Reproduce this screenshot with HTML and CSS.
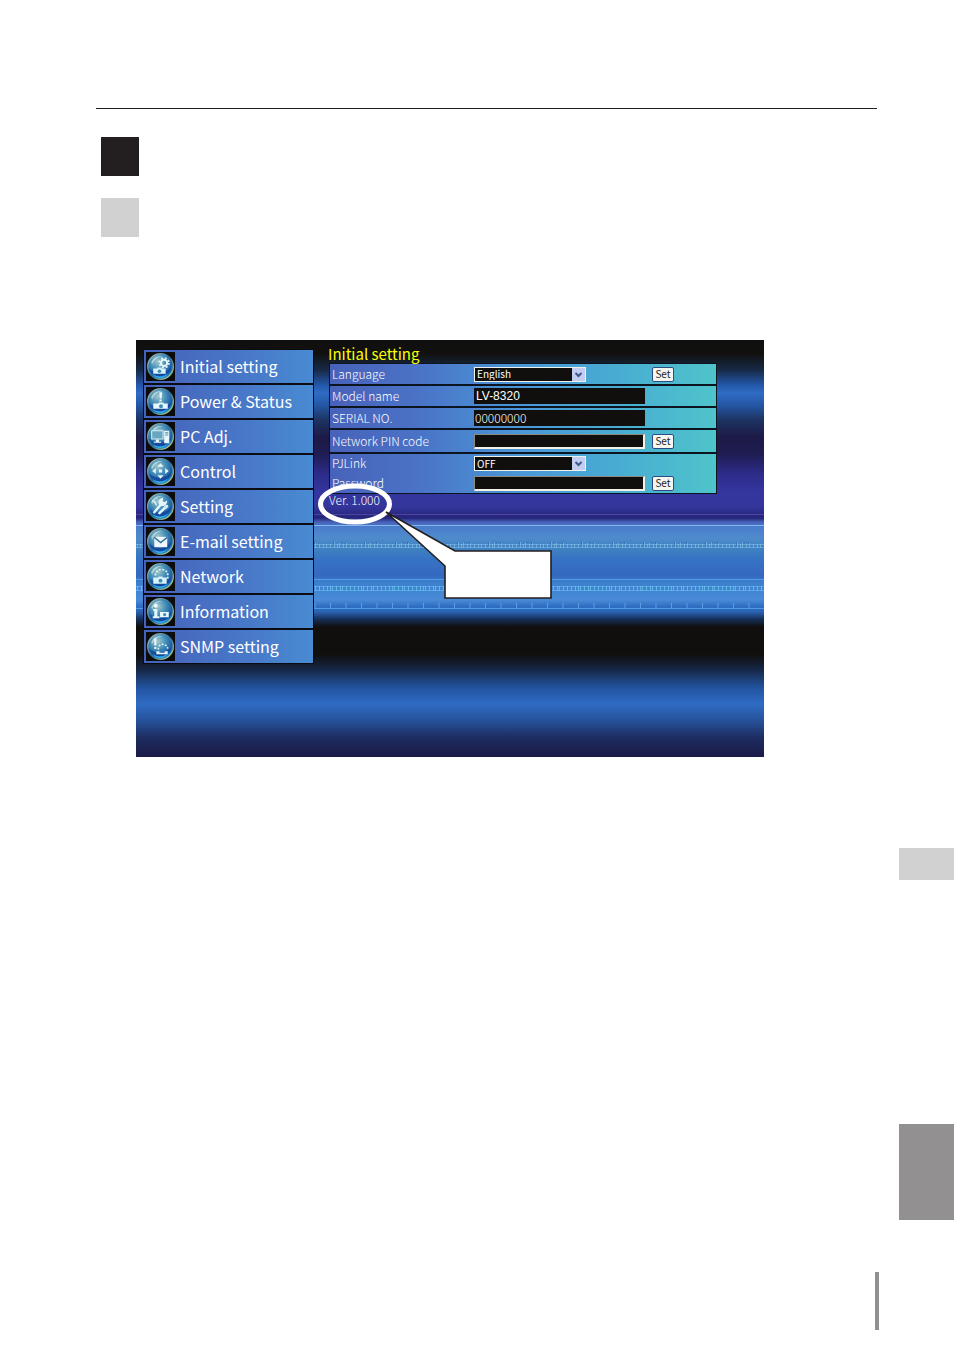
FILE: index.html
```html
<!DOCTYPE html>
<html lang="en">
<head>
<meta charset="utf-8">
<title>Initial setting</title>
<link rel="stylesheet" href="styles.css">
</head>
<body>
<div class="page">
  <main class="sheet">
    <hr class="rule">
    <div class="marker marker-dark"></div>
    <div class="marker marker-light"></div>

    <section class="panel">
      <svg class="backdrop" aria-hidden="true">
        <defs>
          <pattern id="binary" width="31" height="7" patternUnits="userSpaceOnUse" y="202">
            <path d="M0 2.500h31M0 5.500h31" stroke="#74b0e2" stroke-opacity=".7"/>
            <path d="M1.500 2v4M4.500 2v4M8.500 2v4M12.500 0v6M15.500 2v4M17.500 0v6M21.500 2v4M24.500 1v5M28.500 2v4" stroke="#8cc4ee" stroke-opacity=".6"/>
            <path d="M11.500 0v3M16.500 0h4M23.500 0v2" stroke="#2f5fa8" stroke-opacity=".6"/>
          </pattern>
          <pattern id="binary2" width="31" height="7" patternUnits="userSpaceOnUse" y="245">
            <path d="M0 1.500h31M0 5.500h31" stroke="#62b4ec" stroke-opacity=".7"/>
            <path d="M1.500 1v5M5.500 1v5M8.500 1v5M10.500 1v5M14.500 1v5M18.500 1v5M20.500 1v5M24.500 1v5M28.500 1v5" stroke="#6ccaf2" stroke-opacity=".7"/>
          </pattern>
          <pattern id="ticks" width="31" height="7" patternUnits="userSpaceOnUse" x="5" y="263">
            <path d="M3.500 0v6M19 0v6" stroke="#68a8ea" stroke-opacity=".8"/>
          </pattern>
        </defs>
        <rect y="202" width="100%" height="7" fill="url(#binary)"/>
        <rect y="245" width="100%" height="7" fill="url(#binary2)"/>
        <rect y="263" width="100%" height="7" fill="url(#ticks)"/>
        <rect y="174" width="100%" height="1" fill="#4c449e"/>
        <rect y="185" width="100%" height="1" fill="#86b6ee"/>
        <rect y="239" width="100%" height="1" fill="#4f9fe2"/>
        <rect y="268" width="100%" height="1" fill="#4f9ae6"/>
      </svg>

      <svg width="0" height="0" class="defs" aria-hidden="true">
        <defs>
          <radialGradient id="ball" cx=".4" cy=".3" r=".75">
            <stop offset="0" stop-color="#a4c8cc"/>
            <stop offset=".4" stop-color="#4590b8"/>
            <stop offset=".75" stop-color="#1d5aa4"/>
            <stop offset="1" stop-color="#1a9ae0"/>
          </radialGradient>
          <linearGradient id="rim" x1="0" y1="0" x2="1" y2="1">
            <stop offset="0" stop-color="#b8c8b8"/>
            <stop offset=".5" stop-color="#2e6e98"/>
            <stop offset="1" stop-color="#d0dc80"/>
          </linearGradient>
          <symbol id="orb" viewBox="0 0 28 28">
            <circle cx="14" cy="14" r="12.400" fill="url(#ball)" stroke="url(#rim)" stroke-width="1.300"/>
            <path d="M3.500 16c4 5 14 6 21-1-1 5-5 9-10.500 9S4.500 21 3.500 16z" fill="#0e3f98" fill-opacity=".65"/>
            <path d="M6 21c5 4 12 3 16-1-2 3-5 5-8 5s-6-1-8-4z" fill="#38b4f4"/>
            <path d="M5 10c2-5 7-7 11-6-4 0-8 3-10 8z" fill="#e4f0e4" fill-opacity=".6"/>
          </symbol>
        </defs>
      </svg>

      <nav class="menu">
        <a class="item" href="#"><svg class="icon" viewBox="0 0 28 28"><use href="#orb"/><circle cx="17.500" cy="10.500" r="3" fill="none" stroke="#e6f6fa" stroke-width="2"/><circle cx="17.500" cy="10.500" r="4.700" fill="none" stroke="#e6f6fa" stroke-width="1.600" stroke-dasharray="1.900 1.800"/><path d="M7 16h4v-1h4v1h4v5H7z" fill="#d8f2fa"/><circle cx="13" cy="18.500" r="1.700" fill="#3c8cb4"/></svg><span>Initial setting</span></a>
        <a class="item" href="#"><svg class="icon" viewBox="0 0 28 28"><use href="#orb"/><path d="M12.800 5h2.800l-.5 6h-1.800zM13 12h2.200v2H13zM7 16h5v-1h5v1h4v5H7z" fill="#e6f6fa"/><circle cx="14.500" cy="18.500" r="1.900" fill="#3c8cb4"/></svg><span>Power &amp; Status</span></a>
        <a class="item" href="#"><svg class="icon" viewBox="0 0 28 28"><use href="#orb"/><path d="M5.500 8.500h11v8h-11z" fill="#67a8c0" stroke="#d4ecf2"/><path d="M9.500 17h3v2h2v1h-7v-1h2zM17.500 8.500h5v12h-5z" fill="#e6f6fa"/><path d="M18.500 10.500h3M18.500 12.500h3" stroke="#5090b0"/></svg><span>PC Adj.</span></a>
        <a class="item" href="#"><svg class="icon" viewBox="0 0 28 28"><use href="#orb"/><path d="M14 6l3 3.500h-6zM14 21l3-3.500h-6zM6 13.500l3.500-3v6zM22 13.500l-3.500-3v6zM12.500 12h3v3h-3z" fill="#e6f6fa"/></svg><span>Control</span></a>
        <a class="item" href="#"><svg class="icon" viewBox="0 0 28 28"><use href="#orb"/><path d="M8 19.500l6-7M13 20.500l7-7" stroke="#e6f6fa" stroke-width="2.400" stroke-linecap="round"/><path d="M6 8l3 2 1 3M13 12c-1-3 0-5 3-6l-.5 3 2 1.500L20 9c0 3-3 4.500-5 4" fill="#e6f6fa" stroke="#e6f6fa"/><path d="M19 12l3 2-3 3-2-2z" fill="#cdeaf4"/></svg><span>Setting</span></a>
        <a class="item" href="#"><svg class="icon" viewBox="0 0 28 28"><use href="#orb"/><path d="M8 9.500h12.500v10H8z" fill="#f0f8fa"/><path d="M8 10l6.200 5 6.300-5" fill="none" stroke="#2c6c9c" stroke-width="1.300"/></svg><span>E-mail setting</span></a>
        <a class="item" href="#"><svg class="icon" viewBox="0 0 28 28"><use href="#orb"/><path d="M9 13c0-7 11-8 12-1v4" fill="none" stroke="#e6f6fa" stroke-width="1.600" stroke-dasharray="1.800 1.500"/><path d="M7 15h5v-1h4v1h4v6H7z" fill="#d8f2fa"/><circle cx="14" cy="18" r="1.900" fill="#3c8cb4"/></svg><span>Network</span></a>
        <a class="item" href="#"><svg class="icon" viewBox="0 0 28 28"><use href="#orb"/><circle cx="9.500" cy="8.500" r="1.900" fill="#f0f8fa"/><path d="M7 11.500h4v7h2v2H6.500v-2H8v-5H7zM13.500 14.500H22v5h-8.500z" fill="#e6f6fa"/><circle cx="18" cy="17" r="1.500" fill="#3c8cb4"/></svg><span>Information</span></a>
        <a class="item" href="#"><svg class="icon" viewBox="0 0 28 28"><use href="#orb"/><path d="M8 6h2v7H8zM8 14.500h2v2H8z" fill="#f0f8fa"/><path d="M12 17c-1-6 8-7 9-1" fill="none" stroke="#e6f6fa" stroke-width="1.500" stroke-dasharray="1.800 1.400"/><path d="M10 18.500h3v1.500h5v-1.500h3v3H10z" fill="#e6f6fa"/></svg><span>SNMP setting</span></a>
      </nav>

      <form class="content">
        <h1 class="title">Initial setting</h1>
        <div class="rows">
          <div class="row">
            <label for="language">Language</label>
            <span class="pick"><select id="language"><option>English</option></select><svg class="arrow" viewBox="0 0 13 13" aria-hidden="true"><path d="M3.500 5l3 3 3-3" fill="none" stroke="#42588c" stroke-width="2"/></svg></span>
            <button class="set" type="button">Set</button>
          </div>
          <div class="row">
            <label for="model">Model name</label>
            <input class="plain model" id="model" value="LV-8320" readonly>
          </div>
          <div class="row">
            <label for="serial">SERIAL NO.</label>
            <input class="plain" id="serial" value="00000000" readonly>
          </div>
          <div class="row row-pin">
            <label for="pin">Network PIN code</label>
            <input class="field" id="pin">
            <button class="set" type="button">Set</button>
          </div>
          <div class="row row-link">
            <label for="pjlink">PJLink</label>
            <span class="pick"><select id="pjlink"><option>OFF</option></select><svg class="arrow" viewBox="0 0 13 13" aria-hidden="true"><path d="M3.500 5l3 3 3-3" fill="none" stroke="#42588c" stroke-width="2"/></svg></span>
            <label class="second" for="password">Password</label>
            <input class="field" id="password">
            <button class="set" type="button">Set</button>
          </div>
        </div>
        <div class="version">Ver. 1.000
          <svg class="callout" width="240" height="120" viewBox="0 0 240 120" aria-hidden="true">
            <ellipse cx="38" cy="21" rx="34.500" ry="18" fill="none" stroke="#fff" stroke-width="5"/>
            <path d="M69 29l69 39h96v47H128V83z" fill="#fff" stroke="#231f20" stroke-width="1.600"/>
          </svg>
        </div>
      </form>
    </section>

    <div class="folio"></div>
  </main>

  <aside class="rail">
    <div class="tab tab-light"></div>
    <div class="tab tab-dark"></div>
  </aside>
</div>
</body>
</html>
```
FILE: styles.css
```css
* { box-sizing: border-box; }

body {
  margin: 0;
  background: #fff;
  font-family: "Noto Sans CJK JP", "Liberation Sans", sans-serif;
}

.page {
  display: grid;
  grid-template-columns: 1fr 55px;
  min-height: 100vh;
}

.sheet {
  display: flex;
  flex-direction: column;
  padding: 108px 20px 19px 96px;
}

.rule {
  width: auto;
  height: 1px;
  margin: 0 2px 28px 0;
  border: 0;
  background: #231f20;
}

.marker {
  width: 38px;
  height: 39px;
  margin-left: 5px;
}

.marker-dark { background: #231f20; }

.marker-light {
  margin-top: 22px;
  background: #d1d1d1;
}

.panel {
  position: relative;
  display: flex;
  gap: 15px;
  min-height: 417px;
  margin: 103px 115px 0 40px;
  padding: 9px 47px 0 7px;
  color: #fff;
  background: linear-gradient(
    #100f0d 0, #11110f 14px, #172a48 30px, #2357a8 45px, #2f6cc4 53px,
    #2559a8 64px, #1c3362 80px, #1d1a47 97px, #1f1c52 114px,
    #2d2c8a 134px, #34369f 152px, #34369c 166px, #2a2a84 174px, #25257a 178px,
    #4661b8 182px, #4a7dcc 187px, #4f8bcc 198px, #3f82c0 208px,
    #3672c4 220px, #3568c0 236px, #3c7ecc 242px, #4488d4 254px,
    #4a8ad6 260px, #2f70c4 266px, #2a62b0 272px, #16305a 279px, #100f0d 287px,
    #100f0d 314px, #15243f 328px, #2253a0 348px, #2f6cc4 364px,
    #264f96 382px, #1d2c60 398px, #1b1a46 417px);
}

.backdrop {
  position: absolute;
  inset: 0;
  width: 100%;
  height: 100%;
}

.defs { position: absolute; }

.menu {
  position: relative;
  display: flex;
  flex: 0 0 171px;
  flex-direction: column;
  align-self: flex-start;
  gap: 2px;
  padding: 1px;
  background: #0b0b14;
}

.item {
  display: flex;
  align-items: center;
  gap: 5px;
  height: 33px;
  padding-left: 2px;
  color: #fff;
  background: linear-gradient(90deg, #4662ba, #4878c8 60%, #498bd2);
  font-size: 16px;
  line-height: 20px;
  text-decoration: none;
  white-space: nowrap;
}

.item span { padding-bottom: 1px; }

.icon {
  flex: none;
  width: 29px;
  height: 29px;
  background: #0c0c0c;
}

.content {
  position: relative;
  flex: 1;
  min-width: 0;
}

.title {
  position: relative;
  z-index: 1;
  margin: 0 0 0 -1px;
  padding-bottom: 4px;
  color: #ff0;
  font-size: 15px;
  font-weight: 400;
  line-height: 10px;
}

.rows {
  display: grid;
  gap: 2px;
  padding: 1px;
  background: #0c1420;
}

.row {
  display: grid;
  grid-template-columns: 140px 171px 1fr;
  align-items: center;
  column-gap: 2px;
  min-height: 20px;
  padding-left: 2px;
  background: linear-gradient(90deg, #4862ba, #4a72c6 22%, #4a98d8 50%, #48acd2 74%, #4fc4cb);
  font-size: 12px;
  font-weight: 300;
  line-height: 18px;
}

.row label { padding-bottom: 1px; }

.row-pin { min-height: 22px; }

.row-link { min-height: 39px; }

.row-link label {
  padding-bottom: 2px;
  line-height: 17px;
}

.second { grid-column: 1; }

select,
input,
.set {
  margin: 0;
  font-family: inherit;
}

.pick {
  position: relative;
  width: 112px;
  height: 15px;
}

.pick select {
  display: block;
  width: 100%;
  height: 100%;
  padding: 0 2px;
  border: 1px solid #eef0ea;
  border-radius: 0;
  color: #fff;
  background: #100f0d;
  font-size: 10px;
  line-height: 12px;
  appearance: none;
}

.arrow {
  position: absolute;
  top: 1px;
  right: 1px;
  width: 13px;
  height: 13px;
  background: #c2cef0;
  pointer-events: none;
}

.plain,
.field {
  width: 171px;
  border-radius: 0;
  color: #fff;
  background: #100f0d;
}

.plain {
  height: 16px;
  padding: 0 1px;
  border: 0;
  font-size: 12px;
  line-height: 16px;
}

.plain:not(.model) { font-weight: 300; }

.model {
  padding-left: 2px;
  font-family: "Liberation Sans", Arial, sans-serif;
}

.field {
  height: 15px;
  padding: 0 2px;
  border: 2px solid;
  border-width: 1px 2px 2px 1px;
  border-color: #8a8a80 #f4f2e8 #f4f2e8 #8a8a80;
  font-size: 10px;
}

.set {
  width: 22px;
  height: 15px;
  margin-left: 5px;
  padding: 0;
  border: 1px solid #2a4c82;
  border-radius: 2px;
  color: #222;
  background: #f6f5f0;
  font-size: 10px;
  line-height: 12px;
}

.version {
  position: relative;
  font-size: 12px;
  font-weight: 300;
  line-height: 12px;
}

.callout {
  position: absolute;
  top: -11px;
  left: -12px;
}

.folio {
  align-self: flex-end;
  width: 4px;
  height: 58px;
  margin-top: auto;
  background: #929091;
}

.rail { padding-top: 848px; }

.tab-light {
  height: 32px;
  background: #d1d1d1;
}

.tab-dark {
  height: 96px;
  margin-top: 244px;
  background: #929091;
}
```
